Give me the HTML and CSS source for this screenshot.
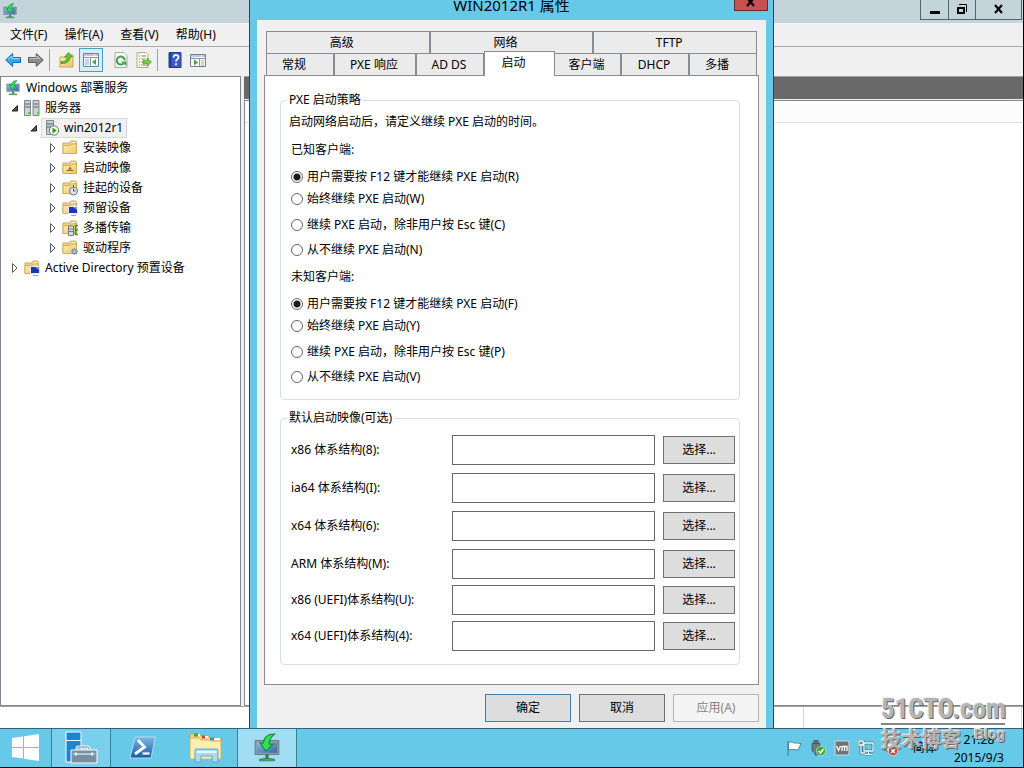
FILE: index.html
```html
<!DOCTYPE html>
<html lang="zh-CN">
<head>
<meta charset="utf-8">
<title>Windows 部署服务</title>
<link rel="stylesheet" href="styles.css">
</head>
<body>
<svg class="defs" aria-hidden="true">
  <defs>
    <linearGradient id="gScreen" x1="0" y1="0" x2="1" y2="1"><stop offset="0" stop-color="#8db9dc"/><stop offset="1" stop-color="#3668a8"/></linearGradient>
    <linearGradient id="gFolder" x1="0" y1="0" x2="1" y2="1"><stop offset="0" stop-color="#fdeeb8"/><stop offset="1" stop-color="#ecc768"/></linearGradient>
    <linearGradient id="gPs" x1="0" y1="0" x2="0" y2="1"><stop offset="0" stop-color="#7db8e6"/><stop offset="1" stop-color="#1a5aa4"/></linearGradient>
    <symbol id="wds" viewBox="0 0 24 28">
      <path d="M1 7h22v13H1z" fill="#8f9ca6" stroke="#6b7c88"/>
      <path d="M2.500 8.500h19v10h-19z" fill="url(#gScreen)"/>
      <path d="M10.500 20h3v4h-3z" fill="#2b7f4b"/>
      <path d="M5 24.500q7-2 14 0v1.500H5z" fill="#49a768" stroke="#1f6a3b" stroke-width=".6"/>
      <path d="M19 1C13 1 9 4 8.500 9.500L5.500 9l5.500 8 6.500-6.500-3.500-.3C14 7 15.500 4 19 1z" fill="#2fe05c" stroke="#118a35"/>
    </symbol>
    <symbol id="folder" viewBox="0 0 16 16">
      <path d="M1 13.500V3h7l1-2h4.500l1 1.500v11z" fill="#edd08a" stroke="#cfa95a"/>
      <path d="M9.500 2.500h3.500" stroke="#fffbe8"/>
      <path d="M1 13.500V5.500h7.500l1-1.500h5v9.500z" fill="url(#gFolder)" stroke="#d5b05c"/>
    </symbol>
    <symbol id="screen" viewBox="0 0 16 16">
      <path d="M6.500 6.500h9v7h-9z" fill="#1d36b5" stroke="#e4e9f6"/><path d="M11 7h4v3z" fill="#7c94ea"/>
      <path d="M9 15.500h5" stroke="#8fa0c4"/>
    </symbol>
    <symbol id="closed" viewBox="0 0 8 12"><path d="M2.500 1.500L7 6 2.500 10.500z" fill="#fff" stroke="#555"/></symbol>
    <symbol id="open" viewBox="0 0 8 12"><path d="M7.500 3.500v5.500H2z" fill="#555" stroke="#222"/></symbol>
  </defs>
</svg>

<div class="desktop">
  <main class="console">
    <header class="titlebar">
      <svg class="icon16"><use href="#wds"/></svg>
      <div class="controls">
        <button aria-label="最小化"><svg width="12" height="12"><path d="M1 7h10v3H1z"/></svg></button>
        <button aria-label="还原"><svg width="12" height="12" fill="none" stroke="#000"><path d="M2 4h6v5H2z" stroke-width="2"/><path d="M3 .5h7.500V8"/></svg></button>
        <button class="wide" aria-label="关闭"><svg width="12" height="12"><path d="M2 1l7 8M9 1L2 9" stroke="#000" stroke-width="2.200"/></svg></button>
      </div>
    </header>
    <nav class="menubar">
      <button>文件(F)</button><button>操作(A)</button><button>查看(V)</button><button>帮助(H)</button>
    </nav>
    <div class="toolbar">
      <button aria-label="后退"><svg class="icon16" viewBox="0 0 16 16"><path d="M.7 8l7-6.500v4h7.800v5H7.700v4z" fill="#36a6ea" stroke="#1769a8"/><path d="M3 7.500l4-3.500v2.500h7.500" fill="none" stroke="#a5dcfa"/></svg></button>
      <button aria-label="前进"><svg class="icon16" viewBox="0 0 16 16"><path d="M15.300 8l-7-6.500v4H.5v5h7.800v4z" fill="#8d8d8d" stroke="#5d5d5d"/><path d="M1.500 6.500H9V4l3 3" fill="none" stroke="#c9c9c9"/></svg></button>
      <span class="sep"></span>
      <button aria-label="向上一级"><svg class="icon16" viewBox="0 0 16 16"><path d="M1 15V5h6l1-2h6v12z" fill="url(#gFolder)" stroke="#cfa54c"/><path d="M2 9.500c4 .5 6-2 6-4.500H5.500L9.500.5l4 4.500H11c0 4-3 7-9 6.500z" fill="#62c136" stroke="#3c8a1d" stroke-width=".7"/></svg></button>
      <button class="pressed" aria-label="显示控制台树" aria-pressed="true"><svg class="icon16" viewBox="0 0 16 16"><path d="M.5 1.500h15v13H.5z" fill="#f8fafc" stroke="#70809a"/><path d="M1 3h10M12 3h3M.5 5.500h15M7.500 6v8" stroke="#8795ad"/><path d="M2 8h4M2 10h4M2 12h4" stroke="#9aa8c0"/><path d="M13 7v6l-4-3z" fill="#3eaa32"/></svg></button>
      <button aria-label="刷新"><svg class="icon16" viewBox="0 0 16 16"><path d="M2 .5h9l3 3v12H2z" fill="#fbfbf6" stroke="#aaa"/><path d="M10.500 11.500a4 4 0 1 1 1.300-3" fill="none" stroke="#3aa548" stroke-width="2"/><path d="M8 9.500h5.500V14z" fill="#3aa548"/></svg></button>
      <button aria-label="导出列表"><svg class="icon16" viewBox="0 0 16 16"><path d="M1 .5h9l2 2v13H1z" fill="#fffbe6" stroke="#b5ab85"/><path d="M3 4h1M5.500 4H10M3 7h1M5.500 7H9M3 10h1M5.500 10H8M3 13h1M5.500 13H10" stroke="#767676"/><path d="M7 8.500h4V6l4.500 4-4.500 4v-2.500H7z" fill="#75ce3f" stroke="#429921" stroke-width=".7"/></svg></button>
      <span class="sep"></span>
      <button aria-label="帮助"><svg class="icon16" viewBox="0 0 16 16"><path d="M2 .5h12v15H2z" fill="#3a5cc6" stroke="#263c86"/><path d="M2.500 1h2v14h-2z" fill="#243d90"/><path d="M6.500 5.500c0-3.500 5-3 5-.3 0 2.300-2.500 2-2.500 4.300M9 11.300v2" fill="none" stroke="#fff" stroke-width="1.800"/></svg></button>
      <button aria-label="显示操作窗格"><svg class="icon16" viewBox="0 0 16 16"><path d="M.5 2.500h15v12H.5z" fill="#f8fafc" stroke="#70809a"/><path d="M1 4h10M12 4h3M.5 6.500h15M9.500 7v7" stroke="#8795ad"/><path d="M11 9h3M11 11h3M11 13h3" stroke="#9aa8c0"/><path d="M4 7.500v6l4-3z" fill="#3eaa32"/></svg></button>
    </div>
    <div class="workspace">
      <aside class="tree">
        <div class="node root"><svg class="icon16"><use href="#wds"/></svg><span>Windows 部署服务</span></div>
        <ul>
          <li>
            <div class="node"><svg class="arrow"><use href="#open"/></svg><svg class="icon16" viewBox="0 0 16 16"><path d="M.5.500h6v15h-6zM9 .5h6v15H9z" fill="#ccd3d6" stroke="#7d878c"/><path d="M1 4h5M1 7h5M9.500 4h5M9.500 7h5" stroke="#59646a"/><path d="M4 13h2M13 13h2" stroke="#5ccc39" stroke-width="2"/></svg><span>服务器</span></div>
            <ul>
              <li>
                <div class="node"><svg class="arrow"><use href="#open"/></svg><span class="selected"><svg class="icon16" viewBox="0 0 16 16"><path d="M2.500.500h7v14h-7z" fill="#c6cdd0" stroke="#7d878c"/><path d="M3 4h6M3 7h4" stroke="#59646a"/><circle cx="10" cy="10.500" r="4.700" fill="#f4faf2" stroke="#5e7d5e"/><path d="M8.500 7.500v6l4.300-3z" fill="#279b27"/></svg><span>win2012r1</span></span></div>
                <ul>
                  <li class="node"><svg class="arrow"><use href="#closed"/></svg><svg class="icon16"><use href="#folder"/></svg><span>安装映像</span></li>
                  <li class="node"><svg class="arrow"><use href="#closed"/></svg><svg class="icon16" viewBox="0 0 16 16"><use href="#folder"/><path d="M8 6.500l2 3H6z" fill="#9a6a14"/><path d="M4.500 10.500h7" stroke="#9a6a14"/></svg><span>启动映像</span></li>
                  <li class="node"><svg class="arrow"><use href="#closed"/></svg><svg class="icon16" viewBox="0 0 16 16"><use href="#folder"/><circle cx="11.500" cy="11" r="4" fill="#dfe6ea" stroke="#68777f"/><path d="M11.500 8.500V11h2M11.500 5v2" fill="none" stroke="#45545c"/></svg><span>挂起的设备</span></li>
                  <li class="node"><svg class="arrow"><use href="#closed"/></svg><svg class="icon16" viewBox="0 0 16 16"><use href="#folder"/><use href="#screen"/></svg><span>预留设备</span></li>
                  <li class="node"><svg class="arrow"><use href="#closed"/></svg><svg class="icon16" viewBox="0 0 16 16"><use href="#folder"/><path d="M6.500 6h5v9.500h-5z" fill="#d4dade" stroke="#717d83"/><path d="M7 9h4M7 11.500h4" stroke="#717d83"/><path d="M13 5.500h3M13 10h3M13 14.500h3M13.500 5v10" stroke="#2e9c34" stroke-width="1.500"/></svg><span>多播传输</span></li>
                  <li class="node"><svg class="arrow"><use href="#closed"/></svg><svg class="icon16" viewBox="0 0 16 16"><use href="#folder"/><path d="M12.500 8v7M9 11.500h7M10 9l5 5M15 9l-5 5" stroke="#8099ac" stroke-width="1.300"/><circle cx="12.500" cy="11.500" r="1.500" fill="#dfe9f0" stroke="#7890a4"/></svg><span>驱动程序</span></li>
                </ul>
              </li>
            </ul>
          </li>
          <li class="node"><svg class="arrow"><use href="#closed"/></svg><svg class="icon16" viewBox="0 0 16 16"><use href="#folder"/><use href="#screen"/></svg><span>Active Directory 预置设备</span></li>
        </ul>
      </aside>
      <section class="details">
        <div class="banner"></div>
        <div class="list"><div class="list-head"></div></div>
      </section>
    </div>
    <footer class="status"><span></span><span></span></footer>
  </main>

  <section class="dialog" role="dialog" aria-labelledby="dlg-title">
    <header class="dialog-title">
      <h1 id="dlg-title">WIN2012R1 属性</h1>
      <button class="close" aria-label="关闭"><svg width="12" height="12"><path d="M2-2l7 8M9-2L2 6" stroke="#000" stroke-width="2.200"/></svg></button>
    </header>
    <div class="client">
      <div class="tabs" role="tablist">
        <div class="tab-row upper"><button role="tab">高级</button><button role="tab">网络</button><button role="tab">TFTP</button></div>
        <div class="tab-row lower"><button role="tab">常规</button><button role="tab">PXE 响应</button><button role="tab">AD DS</button><button role="tab" class="active" aria-selected="true">启动</button><button role="tab">客户端</button><button role="tab">DHCP</button><button role="tab">多播</button></div>
      </div>
      <div class="panel" role="tabpanel">
        <fieldset class="policy">
          <legend>PXE 启动策略</legend>
          <p>启动网络启动后，请定义继续 PXE 启动的时间。</p>
          <div class="options" role="radiogroup" aria-labelledby="known">
            <h2 id="known">已知客户端:</h2>
            <label><input type="radio" name="known" checked>用户需要按 F12 键才能继续 PXE 启动(R)</label>
            <label><input type="radio" name="known">始终继续 PXE 启动(W)</label>
            <label><input type="radio" name="known">继续 PXE 启动，除非用户按 Esc 键(C)</label>
            <label><input type="radio" name="known">从不继续 PXE 启动(N)</label>
          </div>
          <div class="options" role="radiogroup" aria-labelledby="unknown">
            <h2 id="unknown">未知客户端:</h2>
            <label><input type="radio" name="unknown" checked>用户需要按 F12 键才能继续 PXE 启动(F)</label>
            <label><input type="radio" name="unknown">始终继续 PXE 启动(Y)</label>
            <label><input type="radio" name="unknown">继续 PXE 启动，除非用户按 Esc 键(P)</label>
            <label><input type="radio" name="unknown">从不继续 PXE 启动(V)</label>
          </div>
        </fieldset>
        <fieldset class="images">
          <legend>默认启动映像(可选)</legend>
          <div class="field"><label for="f1">x86 体系结构(8):</label><input id="f1" type="text"><button class="push">选择...</button></div>
          <div class="field"><label for="f2">ia64 体系结构(I):</label><input id="f2" type="text"><button class="push">选择...</button></div>
          <div class="field"><label for="f3">x64 体系结构(6):</label><input id="f3" type="text"><button class="push">选择...</button></div>
          <div class="field"><label for="f4">ARM 体系结构(M):</label><input id="f4" type="text"><button class="push">选择...</button></div>
          <div class="field tight"><label for="f5">x86 (UEFI)体系结构(U):</label><input id="f5" type="text"><button class="push">选择...</button></div>
          <div class="field tight"><label for="f6">x64 (UEFI)体系结构(4):</label><input id="f6" type="text"><button class="push">选择...</button></div>
        </fieldset>
      </div>
      <div class="actions"><button class="push default">确定</button><button class="push">取消</button><button class="push" disabled>应用(A)</button></div>
    </div>
  </section>
</div>

<footer class="taskbar">
  <button class="task start" aria-label="开始"><svg width="28" height="28" viewBox="0 0 28 28" fill="#fff"><path d="M0 4l11-1.500V13H0zM12 2.300L27 0v13H12zM0 14h11v10.500L0 23zM12 14h15v13l-15-2.300z"/></svg></button>
  <button class="task running" aria-label="服务器管理器"><svg width="34" height="34" viewBox="0 0 34 34"><path d="M2 1h15v30H2z" fill="#1a86d0" stroke="#fff"/><path d="M2 9.500h15" stroke="#fff"/><path d="M13 20v-2.500q0-1.500 1.500-1.500h9q1.500 0 1.500 1.500V20" fill="none" stroke="#fff" stroke-width="3"/><path d="M13 20v-2.500q0-1.500 1.500-1.500h9q1.500 0 1.500 1.500V20" fill="none" stroke="#60788c"/><path d="M7 19h26v13H7z" fill="#7590a5" stroke="#fff"/><path d="M9 23h22M12 21v4M28 21v4" stroke="#fff"/></svg></button>
  <button class="task" aria-label="Windows PowerShell"><svg width="28" height="26" viewBox="0 0 28 26"><path d="M6 2h20.500L22 23H1z" fill="url(#gPs)" stroke="#b9dcf4"/><path d="M9 5l6.500 7L6 19" fill="none" stroke="#fff" stroke-width="2.800"/><path d="M13.500 18.500h7" stroke="#fff" stroke-width="2.200"/></svg></button>
  <button class="task" aria-label="文件资源管理器"><svg width="34" height="32" viewBox="0 0 34 32"><path d="M1 6V2h10l1 2h8l1 2h11v20H1z" fill="#f2d782" stroke="#c9a24b"/><path d="M5 3h4" stroke="#35a945" stroke-width="3"/><path d="M13 5h3" stroke="#c44a38" stroke-width="3"/><path d="M21 7h4" stroke="#3d8fc9" stroke-width="3"/><path d="M9 3h2M16 5h3M25 7h6" stroke="#fff" stroke-width="2"/><path d="M1 6h9l2 2h8l2 1h10v18H1z" fill="#fbeeb2" stroke="#d7b35c"/><path d="M6 30V18q0-1 1-1h21q1 0 1 1v12h-6v-6H12v6z" fill="#a9d8ef" stroke="#5fa6cc"/><path d="M7.500 20h20" stroke="#e9f8ff" stroke-width="2"/></svg></button>
  <button class="task current" aria-label="Windows 部署服务"><svg width="26" height="30"><use href="#wds"/></svg></button>
  <div class="tray">
    <svg width="16" height="16" viewBox="0 0 16 16"><path d="M2 1v15M2.500 2.500c4-2 5 1.500 8 .5 1.500-.3 2 1 4.500.5l-2.500 6c-3 1.500-5-1.500-10 .5z" fill="#fff" stroke="#3d6c80" stroke-width=".8"/></svg>
    <svg width="16" height="16" viewBox="0 0 16 16"><path d="M4 0h4v3H4zM2 3h8v8l-2 2v2H5v-2l-3-2z" fill="#6c7a80" stroke="#414d52" stroke-width=".7"/><circle cx="11" cy="11" r="4.700" fill="#3daa35" stroke="#e4f5e2" stroke-width=".6"/><path d="M8.500 11l2 2 3-4" fill="none" stroke="#fff" stroke-width="1.600"/></svg>
    <svg width="16" height="16" viewBox="0 0 16 16"><path d="M1 1h14v14H1z" fill="#6d7376" stroke="#d5dadc"/><path d="M2.500 6L4.500 10.500 6.500 6M8 11V6.500h2.500V11M10.500 6.500H13V11" fill="none" stroke="#fff" stroke-width="1.300"/></svg>
    <svg width="16" height="16" viewBox="0 0 16 16" fill="none"><path d="M6 3h9v8H6zM10.500 11v3M7 14.500h7M1 1h4v4H1zM3 5v8h4" stroke="#24586e" stroke-width="2.600"/><path d="M6 3h9v8H6zM10.500 11v3M7 14.500h7M1 1h4v4H1zM3 5v8h4" stroke="#fff" stroke-width="1.300"/></svg>
    <svg width="16" height="16" viewBox="0 0 16 16"><path d="M1 5h3l5-4v13l-5-4H1z" fill="#e6edef" stroke="#4a6b78"/><circle cx="11" cy="11" r="4.700" fill="#d63a2d" stroke="#fff" stroke-width=".6"/><path d="M9 9l4 4M13 9l-4 4" stroke="#fff" stroke-width="1.500"/></svg>
    <span class="ime">简体</span>
    <div class="clock"><span>21:28</span><span>2015/9/3</span></div>
  </div>
</footer>

<div class="watermark">
  <div class="mark-top">51CTO.com</div>
  <div class="mark-bottom"><span>技术博客</span><span class="blog">Blog</span></div>
</div>
</body>
</html>
```
FILE: styles.css
```css
* { box-sizing: border-box; }
body {
  margin: 0;
  height: 100vh;
  display: flex;
  flex-direction: column;
  position: relative;
  overflow: hidden;
  border-right: 1px solid #000;
  border-bottom: 1px solid #000;
  background: #66c9e8;
  color: #000;
  font: 12px/18px "Noto Sans", "Noto Sans CJK SC", sans-serif;
}
button, input { font: inherit; color: inherit; }
button { padding: 0; border: 0; background: none; }
svg { display: block; flex: none; }
h1, h2, p, ul { margin: 0; padding: 0; font-size: 12px; font-weight: 400; }
ul { list-style: none; }
.defs { position: absolute; width: 0; height: 0; }
.icon16 { width: 16px; height: 16px; }
.desktop { flex: 1; min-height: 0; position: relative; }

/* console window */
.console { height: 100%; display: flex; flex-direction: column; background: #f0f0f0; }
.titlebar { height: 23px; display: flex; justify-content: space-between; background: #c3d5da; padding: 3px 1px 0 2px; }
.controls { display: flex; height: 20px; margin-top: -3px; border: 1px solid #56636a; border-top: 0; }
.controls button { width: 27px; display: grid; place-items: center; }
.controls button + button { border-left: 1px solid #56636a; }
.controls .wide { width: 46px; }
.menubar { height: 24px; display: flex; gap: 17px; padding-left: 10px; border-bottom: 1px solid #a9a9a9; }
.toolbar { height: 29px; display: flex; align-items: center; gap: 7px; padding-left: 5px; padding-bottom: 4px; }
.sep { width: 1px; height: 22px; margin: 0 2px 0 -2px; background: #a0a0a0; }
.pressed { margin: 0 3px 0 -3px; padding: 3px; border: 1px solid #4a9fc4; background: #d5edf9; }
.workspace { flex: 1; min-height: 0; display: flex; gap: 3px; }
.tree { width: 241px; border: 1px solid #82878f; background: #fff; padding-top: 1px; }
.tree ul ul { padding-left: 19px; }
.node { display: flex; align-items: center; height: 20px; padding-left: 9px; white-space: nowrap; }
.node > .icon16 { margin-right: 5px; }
.node.root { padding-left: 4px; }
.arrow { width: 8px; height: 12px; margin-right: 6px; }
.selected { display: flex; align-items: center; gap: 4px; height: 20px; margin-left: -2px; padding: 0 3px 0 2px; border: 1px solid #d9d9d9; background: #f1f1f1; }
.details { flex: 1; display: flex; flex-direction: column; }
.banner { height: 23px; border-top: 1px solid #a0a0a0; background: #696969; }
.list { flex: 1; margin-top: 1px; border: 1px solid #82878f; border-right: 0; background: #fff; }
.list-head { height: 22px; border-bottom: 1px solid #dedede; background: #fcfcfc; }
.status { height: 22px; display: flex; justify-content: flex-end; border-top: 1px solid #a0a0a0; background: #fff; }
.status span { border-left: 1px solid #d7d7d7; width: 218px; }
.status span + span { width: 2px; }

/* properties dialog */
.dialog {
  position: absolute;
  left: 249px;
  top: 0;
  bottom: 0;
  width: 525px;
  display: flex;
  flex-direction: column;
  padding: 0 7px;
  border: solid #1d4b5c;
  border-width: 0 1px;
  background: #66c9e8;
}
.dialog-title { height: 20px; display: flex; justify-content: center; }
.dialog-title h1 { font-size: 15px; line-height: 10px; }
.close { position: absolute; right: 5px; top: 0; width: 34px; height: 11px; border: 1px solid #68292a; border-top: 0; background: #c75050; display: grid; justify-items: center; align-items: start; overflow: hidden; }
.client { flex: 1; min-height: 0; display: flex; flex-direction: column; padding: 11px 7px 6px; background: #f0f0f0; }
.tabs { padding: 0 2px; }
.tab-row { display: grid; height: 22px; }
.tab-row button { padding-right: 12px; background: #ebebeb; border: 1px solid #898c95; border-bottom: 0; }
.upper { grid-template-columns: 1fr 1fr 1fr; }
.lower { grid-template-columns: 68px 82px 68px 71px 66px 68px 1fr; }
.lower button:nth-child(2), .lower button:nth-child(3), .lower button:nth-child(5), .lower button:nth-child(6) { padding-right: 2px; }
.lower .active { position: relative; height: 25px; margin: -2px 0 -1px; padding-bottom: 3px; background: #fff; }
.lower .active + button { border-left: 0; }
.panel { flex: 1; min-height: 0; display: flex; flex-direction: column; gap: 9px; padding: 15px 18px 19px 15px; border: 1px solid #898c95; background: #fff; }
fieldset { margin: 0; min-width: 0; border: 1px solid #d5dfe5; border-radius: 4px; }
legend { margin-left: -1px; padding: 0 2px; line-height: 18px; }
.policy { flex: 1; padding: 4px 8px 0 7px; }
.images { padding: 8px 4px 13px 7px; }
.policy p { margin: 0 0 10px 1px; }
.options { padding: 0 3px 9px; }
.options h2 { margin-bottom: 9px; }
.options label { display: flex; align-items: center; gap: 4px; margin-bottom: 7px; }
.options h2 + label { margin-bottom: 4px; }
.options h2 + label + label { margin-bottom: 8px; }
.options label:last-child { margin-bottom: 0; }
.options input { appearance: none; width: 12px; height: 12px; margin: 0; border: 1px solid #666; border-radius: 50%; background: #fff; }
.options input:checked { background: radial-gradient(circle, #1c1c1c 3px, #fff 4px); }
.field { display: grid; grid-template-columns: 1fr 203px 72px; column-gap: 8px; align-items: center; padding-left: 3px; }
.field + .field { margin-top: 8px; }
.field + .tight { margin-top: 6px; }
.field input { width: 100%; height: 30px; padding: 0 4px; border: 1px solid #686868; background: #fff; }
.push { height: 28px; border: 1px solid #707070; background: #dddddd; }
.actions { display: flex; justify-content: flex-end; gap: 8px; padding-top: 9px; }
.actions .push { width: 86px; }
.push.default { border-color: #3c7fb1; }
.push:disabled { border-color: #b5b5b5; background: #f4f4f4; color: #838383; }

/* taskbar */
.taskbar { height: 39px; display: flex; border-top: 1px solid #2f6478; background: #66c9e8; }
.task { width: 63px; display: grid; place-items: center; }
.task.start { width: 51px; }
.task.running, .task.current { width: 60px; border: solid #3a7e96; border-width: 0 1px; background: #78d0ec; }
.task.current { background: #a2def3; }
.tray { display: flex; align-items: center; gap: 8px; margin-left: auto; padding-right: 19px; }
.ime { margin-left: 7px; }
.clock { display: flex; flex-direction: column; align-items: center; margin-left: 9px; padding-top: 2px; }

/* watermark */
.watermark { position: absolute; right: 18px; bottom: 12px; width: 124px; color: #b4b4b4; text-shadow: 1px 1px 0 #666, -1px -1px 0 #eee; font-weight: 700; }
.mark-top { font: 700 27px/28px "Liberation Sans Narrow", "Roboto Condensed", "DejaVu Sans Condensed", sans-serif; border-bottom: 2px solid #858585; }
.mark-bottom { display: flex; justify-content: space-between; font-size: 20px; line-height: 30px; }
.blog { font: 700 14px/18px "Liberation Sans", sans-serif; }
```
